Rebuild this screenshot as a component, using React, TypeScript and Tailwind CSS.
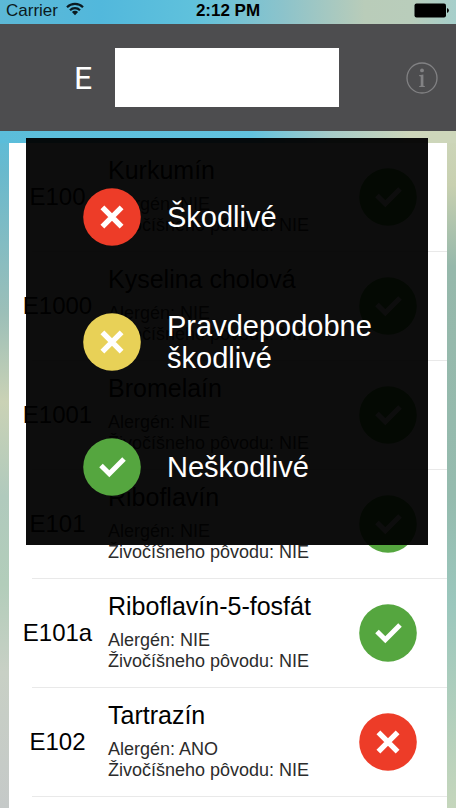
import React from "react";

type Rating = "harmful" | "suspect" | "safe";

interface Additive {
  code: string;
  name: string;
  allergen: string;
  animal: string;
  rating: Rating;
}

const additives: Additive[] = [
  { code: "E100", name: "Kurkumín", allergen: "NIE", animal: "NIE", rating: "safe" },
  { code: "E1000", name: "Kyselina cholová", allergen: "NIE", animal: "NIE", rating: "safe" },
  { code: "E1001", name: "Bromelaín", allergen: "NIE", animal: "NIE", rating: "safe" },
  { code: "E101", name: "Riboflavín", allergen: "NIE", animal: "NIE", rating: "safe" },
  { code: "E101a", name: "Riboflavín-5-fosfát", allergen: "NIE", animal: "NIE", rating: "safe" },
  { code: "E102", name: "Tartrazín", allergen: "ANO", animal: "NIE", rating: "harmful" },
];

const legend: { rating: Rating; label: string }[] = [
  { rating: "harmful", label: "Škodlivé" },
  { rating: "suspect", label: "Pravdepodobne škodlivé" },
  { rating: "safe", label: "Neškodlivé" },
];

const ratingColors: Record<Rating, string> = {
  harmful: "text-[#ed3c28]",
  suspect: "text-[#e8d157]",
  safe: "text-[#55a63f]",
};

function RatingIcon({ rating }: { rating: Rating }) {
  return (
    <svg
      viewBox="0 0 58 58"
      className={`size-[58px] shrink-0 ${ratingColors[rating]}`}
      aria-hidden="true"
    >
      <circle cx="29" cy="29" r="28.8" fill="currentColor" />
      {rating === "safe" ? (
        <path d="M18 27.5 26.3 35.8 41 21.1" fill="none" stroke="#fff" strokeWidth="5" />
      ) : (
        <path
          d="M19.4 19.4 38.6 38.6M38.6 19.4 19.4 38.6"
          fill="none"
          stroke="#fff"
          strokeWidth="5.4"
        />
      )}
    </svg>
  );
}

function StatusBar() {
  return (
    <div className="grid h-6 grid-cols-3 items-center bg-[linear-gradient(90deg,#5cb8d6_0%,#52b8dc_22%,#5fc1dc_42%,#8cc3cb_62%,#b9ccb9_80%,#b9cdbb_90%,#a6cfcb_100%)] px-1.5 pb-0.5 text-[17px] leading-5 text-[#0b1a20]">
      <div className="flex items-center gap-2">
        <span>Carrier</span>
        <svg viewBox="0 0 18 14" className="mb-1 h-3.5 w-[18px]" fill="none" stroke="currentColor">
          <path d="M1 5.2a11.3 11.3 0 0 1 16 0" strokeWidth="2.2" />
          <path d="M4 8.2a7.1 7.1 0 0 1 10 0" strokeWidth="2.2" />
          <path d="M9 13.2 5.9 10.1a4.4 4.4 0 0 1 6.2 0z" fill="currentColor" stroke="none" />
        </svg>
      </div>
      <span className="text-center font-bold text-black">2:12 PM</span>
      <svg viewBox="0 0 36 15" className="mb-0.5 h-[15px] w-9 justify-self-end text-black">
        <rect x="0.5" y="0.5" width="31.5" height="14" rx="2" fill="currentColor" />
        <path d="M33 5a2.6 2.6 0 0 1 0 5z" fill="currentColor" />
      </svg>
    </div>
  );
}

function SearchHeader() {
  return (
    <header className="flex h-[107px] items-center bg-[#4d4d4f] pr-[18px] pl-[74px]">
      <label
        htmlFor="code"
        className="w-[41px] font-['Roboto','Liberation_Sans',sans-serif] text-[32px] leading-9 text-white"
      >
        E
      </label>
      <input id="code" type="text" className="h-[59px] min-w-0 flex-1 bg-white px-3 text-2xl outline-none" />
      <button type="button" aria-label="Info" className="ml-[67px] text-[#828284]">
        <svg viewBox="0 0 32 32" className="size-8" fill="none">
          <circle cx="16" cy="16" r="15" stroke="currentColor" strokeWidth="1.3" />
          <circle cx="16" cy="8.4" r="1.9" fill="currentColor" />
          <path
            d="M13 13.2 17.4 12.4v11.4l1.5.4v.7h-5.8v-.7l1.6-.4v-9.4l-1.7-.5z"
            fill="currentColor"
          />
        </svg>
      </button>
    </header>
  );
}

function AdditiveRow({ additive }: { additive: Additive }) {
  return (
    <li className="pl-[23px]">
      <div className="flex h-[109px] items-center border-b border-[#e9e9e9]">
        {/* long codes may run past the start of the divider */}
        <span className="-ml-[23px] w-[97px] text-center text-2xl">{additive.code}</span>
        <div className="min-w-0 flex-1 pl-0.5">
          <h2 className="mb-3 text-[25px] leading-6">{additive.name}</h2>
          <p className="text-lg leading-[21px] text-[#2c2c2c]">Alergén: {additive.allergen}</p>
          <p className="text-lg leading-[21px] text-[#2c2c2c]">
            Živočíšneho pôvodu: {additive.animal}
          </p>
        </div>
        <div className="mr-[30px]">
          <RatingIcon rating={additive.rating} />
        </div>
      </div>
    </li>
  );
}

function Legend() {
  return (
    <div
      role="dialog"
      aria-label="Legenda"
      className="absolute top-[7px] right-7 left-[26px] bg-black/95 py-4"
    >
      <ul>
        {legend.map((item) => (
          <li key={item.rating} className="flex h-[125px] items-center gap-[26px] pl-[57px]">
            <RatingIcon rating={item.rating} />
            <span className="w-[220px] text-[29px] leading-8 text-white">{item.label}</span>
          </li>
        ))}
      </ul>
    </div>
  );
}

export default function App() {
  return (
    <div className="flex h-screen flex-col overflow-hidden bg-[#9fc4b8] font-['Liberation_Sans',Arial,sans-serif]">
      <StatusBar />
      <SearchHeader />
      <main className="relative flex min-h-0 flex-1 flex-col bg-[linear-gradient(90deg,#5bbdda_0%,#62c2de_55%,#a5cbc9_72%,#cdd6ba_90%),linear-gradient(180deg,#5bbdda_0%,#69b9cd_6%,#9cbfb8_27%,#cad2b5_40%,#b0cabd_54%,#b2cdba_67%,#c8d0c5_80%,#c5c9c8_100%),linear-gradient(180deg,#cdd6ba_0%,#c8d0b0_8%,#96b8ab_20%,#95bbae_54%,#9bc7bd_70%,#c5d6bc_100%)] bg-[size:100%_12px,50%_100%,50%_100%] bg-[position:0_0,0_0,100%_0] bg-no-repeat px-[9px] pt-3">
        <ul className="flex-1 bg-white">
          {additives.map((additive) => (
            <AdditiveRow key={additive.code} additive={additive} />
          ))}
        </ul>
        <Legend />
      </main>
    </div>
  );
}
